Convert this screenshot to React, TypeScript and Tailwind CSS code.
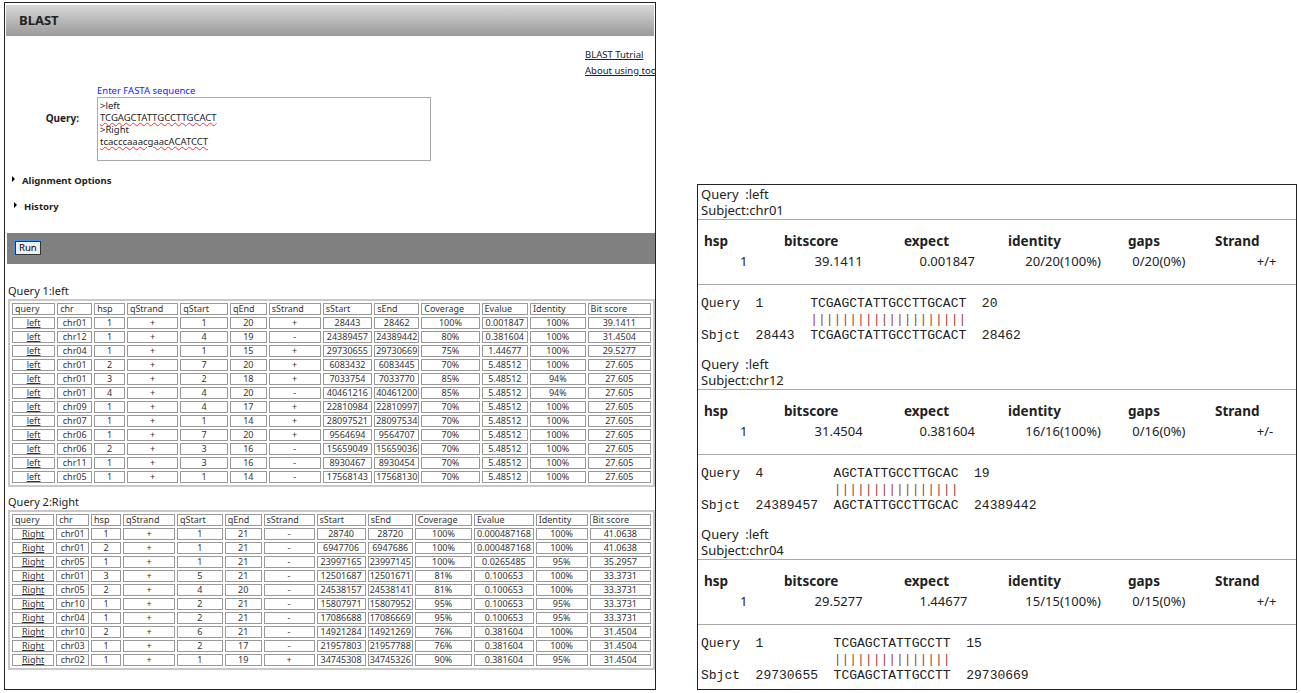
import React from 'react';

const mono = "font-['Liberation_Mono']";

const cols1 = [45, 36, 32, 53, 50, 38, 54, 50, 45, 60, 47, 58, 67];
const cols2 = [45, 34, 32, 55, 49, 39, 54, 50, 45, 60, 60, 55, 67];
const heads = ['query', 'chr', 'hsp', 'qStrand', 'qStart', 'qEnd', 'sStrand', 'sStart', 'sEnd', 'Coverage', 'Evalue', 'Identity', 'Bit score'];

const rows1 = [
  ['left', 'chr01', '1', '+', '1', '20', '+', '28443', '28462', '100%', '0.001847', '100%', '39.1411'],
  ['left', 'chr12', '1', '+', '4', '19', '-', '24389457', '24389442', '80%', '0.381604', '100%', '31.4504'],
  ['left', 'chr04', '1', '+', '1', '15', '+', '29730655', '29730669', '75%', '1.44677', '100%', '29.5277'],
  ['left', 'chr01', '2', '+', '7', '20', '+', '6083432', '6083445', '70%', '5.48512', '100%', '27.605'],
  ['left', 'chr01', '3', '+', '2', '18', '+', '7033754', '7033770', '85%', '5.48512', '94%', '27.605'],
  ['left', 'chr01', '4', '+', '4', '20', '-', '40461216', '40461200', '85%', '5.48512', '94%', '27.605'],
  ['left', 'chr09', '1', '+', '4', '17', '+', '22810984', '22810997', '70%', '5.48512', '100%', '27.605'],
  ['left', 'chr07', '1', '+', '1', '14', '+', '28097521', '28097534', '70%', '5.48512', '100%', '27.605'],
  ['left', 'chr06', '1', '+', '7', '20', '+', '9564694', '9564707', '70%', '5.48512', '100%', '27.605'],
  ['left', 'chr06', '2', '+', '3', '16', '-', '15659049', '15659036', '70%', '5.48512', '100%', '27.605'],
  ['left', 'chr11', '1', '+', '3', '16', '-', '8930467', '8930454', '70%', '5.48512', '100%', '27.605'],
  ['left', 'chr05', '1', '+', '1', '14', '-', '17568143', '17568130', '70%', '5.48512', '100%', '27.605'],
];

const rows2 = [
  ['Right', 'chr01', '1', '+', '1', '21', '-', '28740', '28720', '100%', '0.000487168', '100%', '41.0638'],
  ['Right', 'chr01', '2', '+', '1', '21', '-', '6947706', '6947686', '100%', '0.000487168', '100%', '41.0638'],
  ['Right', 'chr05', '1', '+', '1', '21', '-', '23997165', '23997145', '100%', '0.0265485', '95%', '35.2957'],
  ['Right', 'chr01', '3', '+', '5', '21', '-', '12501687', '12501671', '81%', '0.100653', '100%', '33.3731'],
  ['Right', 'chr05', '2', '+', '4', '20', '-', '24538157', '24538141', '81%', '0.100653', '100%', '33.3731'],
  ['Right', 'chr10', '1', '+', '2', '21', '-', '15807971', '15807952', '95%', '0.100653', '95%', '33.3731'],
  ['Right', 'chr04', '1', '+', '2', '21', '-', '17086688', '17086669', '95%', '0.100653', '95%', '33.3731'],
  ['Right', 'chr10', '2', '+', '6', '21', '-', '14921284', '14921269', '76%', '0.381604', '100%', '31.4504'],
  ['Right', 'chr03', '1', '+', '2', '17', '-', '21957803', '21957788', '76%', '0.381604', '100%', '31.4504'],
  ['Right', 'chr02', '1', '+', '1', '19', '+', '34745308', '34745326', '90%', '0.381604', '95%', '31.4504'],
];

function HitTable({ cols, rows }: { cols: number[]; rows: string[][] }) {
  return (
    <table className={`ml-[3px] border-separate border-spacing-[2px] border-2 border-[#c8c8c8] text-[9px] leading-[10px] text-[#333] ${mono}`}>
      <thead>
        <tr>
          {heads.map((h, i) => (
            <td key={h} style={{ width: cols[i] }} className="border border-[#999] px-[2px] h-[12px] text-left">
              {h}
            </td>
          ))}
        </tr>
      </thead>
      <tbody>
        {rows.map((r, ri) => (
          <tr key={ri}>
            {r.map((c, i) => (
              <td key={i} className="border border-[#999] px-[1px] h-[12px] text-center whitespace-nowrap">
                {i === 0 ? <span className="underline">{c}</span> : c}
              </td>
            ))}
          </tr>
        ))}
      </tbody>
    </table>
  );
}

function Arrow() {
  return <span className="inline-block border-y-[3px] border-l-[3px] border-y-transparent border-l-black mr-[7px] align-[2px]" />;
}

function LeftPanel() {
  return (
    <div className="absolute left-[4px] top-[2px] w-[652px] h-[688px] border border-[#222] overflow-hidden bg-white font-['Liberation_Sans']">
      <div className="h-[31px] mx-[1px] mt-[2px] bg-gradient-to-b from-[#d8d8d8] to-[#9a9a9a] flex items-center pl-[13px] text-[13px] font-bold text-[#222]">
        BLAST
      </div>
      <div className="flex justify-end mt-[11px]">
        <div className="w-[70px] text-[9.5px] leading-[16px] text-[#222] whitespace-nowrap overflow-hidden">
          <div className="underline">BLAST Tutrial</div>
          <div className="underline">About using tools</div>
        </div>
      </div>
      <div className="flex mt-[6px]">
        <div className="w-[92px] pr-[18px] text-right pt-[26px] text-[10px] font-bold text-[#222]">Query:</div>
        <div>
          <div className="text-[9.5px] text-[#2020ff] leading-[12px]">Enter FASTA sequence</div>
          <div className="w-[334px] h-[64px] border border-[#aaa] px-[2px] pt-[2px] text-[9.5px] leading-[12px] text-[#222]">
            <div>&gt;left</div>
            <div className="underline decoration-wavy decoration-red-500">TCGAGCTATTGCCTTGCACT</div>
            <div>&gt;Right</div>
            <div className="underline decoration-wavy decoration-red-500">tcacccaaacgaacACATCCT</div>
          </div>
        </div>
      </div>
      <div className="ml-[7px] mt-[13px] text-[9.5px] font-bold text-[#222]"><Arrow />Alignment Options</div>
      <div className="ml-[9px] mt-[12px] text-[9.5px] font-bold text-[#222]"><Arrow />History</div>
      <div className="mt-[18px] ml-[2px] h-[31px] bg-[#808080] flex items-center pl-[8px]">
        <button className="h-[14px] px-[3px] text-[9.5px] leading-[12px] bg-[#eee] border border-[#333] outline outline-[#4a8fe0]">Run</button>
      </div>
      <div className={`mt-[20px] ml-[3px] text-[11px] text-[#222] ${mono} leading-[14px]`}>Query 1:left</div>
      <div className="mt-[1px]"><HitTable cols={cols1} rows={rows1} /></div>
      <div className={`mt-[8px] ml-[3px] text-[11px] text-[#222] ${mono} leading-[14px]`}>Query 2:Right</div>
      <div className="mt-[1px]"><HitTable cols={cols2} rows={rows2} /></div>
    </div>
  );
}

const hdrW = [80, 120, 104, 120, 87];

function Block({ subj, vals, q, s, qs, ss, seq, pad }: { subj: string; vals: string[]; q: string; s: string; qs: string; ss: string; seq: string; pad: number }) {
  const sp = (n: number) => ' '.repeat(n);
  return (
    <div>
      <div className="px-[3px] whitespace-pre">Query  :left</div>
      <div className="px-[3px]">Subject:{subj}</div>
      <div className="border-t border-[#aaa] mt-[1px]" />
      <div className="flex pl-[6px] mt-[13px] font-bold font-['Liberation_Serif'] text-[13.5px]">
        {['hsp', 'bitscore', 'expect', 'identity', 'gaps', 'Strand'].map((h, i) => (
          <div key={h} style={{ width: hdrW[i] }}>{h}</div>
        ))}
      </div>
      <div className="flex mt-[4px] pl-[42px]">
        {vals.map((v, i) => (
          <div key={i} style={{ width: [76, 107, 108, 109, 127, 40][i] }}>{v}</div>
        ))}
      </div>
      <div className="border-t border-[#aaa] mt-[15px]" />
      <pre className={`px-[3px] mt-[11px] ${mono} leading-[16px]`}>
        {`Query  ${q}${sp(pad - 7 - q.length)}${seq}  ${qs}\n`}
        {sp(pad)}<span className="text-[#a04040]">{'|'.repeat(seq.length)}</span>
        {`\nSbjct  ${s}${sp(pad - 7 - s.length)}${seq}  ${ss}`}
      </pre>
      <div className="h-[12px]" />
    </div>
  );
}

function RightPanel() {
  return (
    <div className={`absolute left-[697px] top-[184px] w-[600px] h-[506px] border border-[#222] overflow-hidden bg-white text-[13px] leading-[16px] text-[#222] ${mono}`}>
      <div className="mt-[1px]" />
      <Block subj="chr01" vals={['1', '39.1411', '0.001847', '20/20(100%)', '0/20(0%)', '+/+']} q="1" s="28443" qs="20" ss="28462" seq="TCGAGCTATTGCCTTGCACT" pad={14} />
      <Block subj="chr12" vals={['1', '31.4504', '0.381604', '16/16(100%)', '0/16(0%)', '+/-']} q="4" s="24389457" qs="19" ss="24389442" seq="AGCTATTGCCTTGCAC" pad={17} />
      <Block subj="chr04" vals={['1', '29.5277', '1.44677', '15/15(100%)', '0/15(0%)', '+/+']} q="1" s="29730655" qs="15" ss="29730669" seq="TCGAGCTATTGCCTT" pad={17} />
    </div>
  );
}

export default function App() {
  return (
    <div className="relative w-[1301px] h-[693px] bg-white overflow-hidden">
      <LeftPanel />
      <RightPanel />
    </div>
  );
}
